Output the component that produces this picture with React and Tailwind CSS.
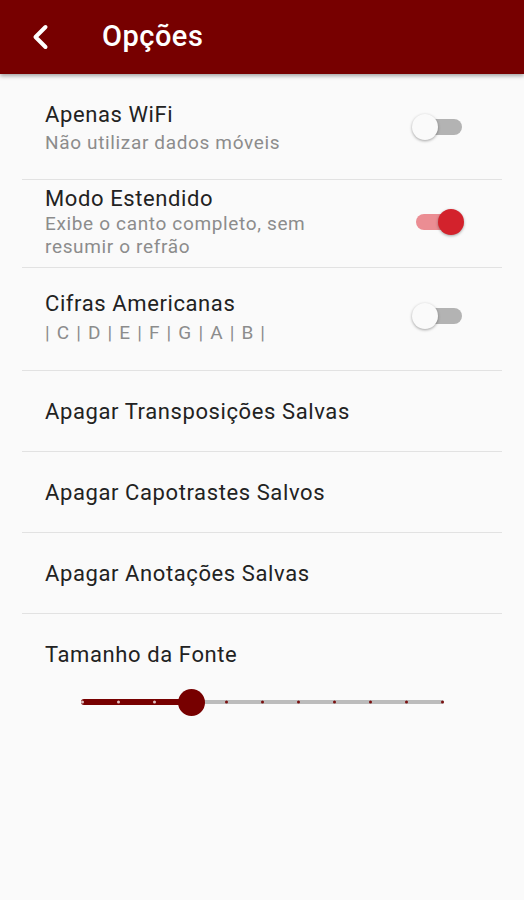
import { useState } from "react";

const Toggle = ({ on, onChange }) => (
  <button
    type="button"
    onClick={onChange}
    aria-pressed={on}
    className={`flex h-[30px] w-[52px] shrink-0 items-center rounded-full ${
      on ? "flex-row-reverse" : ""
    }`}
  >
    <span
      className={`z-10 h-[26px] w-[26px] shrink-0 rounded-full shadow-[0_1px_3px_rgba(0,0,0,0.35)] ${
        on ? "bg-[#d3222c]" : "bg-[#fafafa]"
      }`}
    />
    <span
      className={`h-[16px] flex-1 ${
        on ? "-mr-[13px] ml-[4px] rounded-l-full bg-[#eb8d93]" : "-ml-[13px] mr-[2px] rounded-r-full bg-[#b3b3b3]"
      }`}
    />
  </button>
);

const Divider = () => <div className="mx-[22px] h-px bg-[#e2e2e2]" />;

const ToggleRow = ({ title, subtitle, on, onChange, className, titleClass, subClass }) => (
  <div className={`flex items-center justify-between pl-[45px] pr-[60px] ${className}`}>
    <div>
      <div className={`text-[22px] tracking-[0.6px] text-[#222] ${titleClass}`}>{title}</div>
      <div className={`text-[19px] text-[#8c8c8c] ${subClass}`}>{subtitle}</div>
    </div>
    <Toggle on={on} onChange={onChange} />
  </div>
);

const ActionRow = ({ label }) => (
  <button
    type="button"
    className="flex h-[80px] w-full items-center pl-[45px] text-left text-[22px] tracking-[0.6px] text-[#222]"
  >
    {label}
  </button>
);

export default function App() {
  const [wifi, setWifi] = useState(false);
  const [extended, setExtended] = useState(true);
  const [american, setAmerican] = useState(false);
  const [size, setSize] = useState(3);
  const steps = 10;
  const pct = (size / steps) * 100;

  return (
    <div
      className="flex min-h-[900px] w-full flex-col bg-[#fafafa]"
      style={{ fontFamily: "Roboto, 'Liberation Sans', sans-serif" }}
    >
      <header className="z-10 flex h-[74px] items-center gap-[52px] bg-[#770000] pl-[30px] shadow-[0_2px_4px_rgba(0,0,0,0.35)]">
        <button type="button" className="flex h-[30px] w-[20px] items-center justify-center">
          <svg width="20" height="28" viewBox="0 0 20 28" fill="none">
            <path d="M15.5 4L5.5 14l10 10" stroke="#fff" strokeWidth="4" strokeLinecap="round" strokeLinejoin="round" />
          </svg>
        </button>
        <h1 className="text-[29px] font-medium tracking-[0.5px] text-white">Opções</h1>
      </header>

      <ToggleRow
        className="h-[105px] pt-[1px]"
        titleClass="leading-[32px]"
        subClass="leading-[24px] tracking-[0.65px]"
        title="Apenas WiFi"
        subtitle="Não utilizar dados móveis"
        on={wifi}
        onChange={() => setWifi((v) => !v)}
      />
      <Divider />
      <ToggleRow
        className="h-[87px] pb-[3px]"
        titleClass="leading-[26px]"
        subClass="leading-[23px] tracking-[0.65px]"
        title="Modo Estendido"
        subtitle={<>Exibe o canto completo, sem<br />resumir o refrão</>}
        on={extended}
        onChange={() => setExtended((v) => !v)}
      />
      <Divider />
      <ToggleRow
        className="h-[102px] pb-[6px]"
        titleClass="leading-[34px]"
        subClass="leading-[24px] tracking-[1.2px]"
        title="Cifras Americanas"
        subtitle="| C | D | E | F | G | A | B |"
        on={american}
        onChange={() => setAmerican((v) => !v)}
      />
      <Divider />
      <ActionRow label="Apagar Transposições Salvas" />
      <Divider />
      <ActionRow label="Apagar Capotrastes Salvos" />
      <Divider />
      <ActionRow label="Apagar Anotações Salvas" />
      <Divider />

      <div className="flex flex-col pt-[26px]">
        <div className="pl-[45px] text-[22px] leading-[30px] tracking-[0.6px] text-[#222]">Tamanho da Fonte</div>
        <div className="relative ml-[81px] mr-[80px] mt-[18px] flex h-[28px] items-center">
          <div className="h-[6px] rounded-l-full bg-[#770000]" style={{ width: `${pct}%` }} />
          <button
            type="button"
            onClick={() => setSize((s) => (s + 1) % (steps + 1))}
            className="z-10 -mx-[13.5px] h-[27px] w-[27px] shrink-0 translate-x-[2px] rounded-full bg-[#770000]"
          />
          <div className="h-[4px] flex-1 rounded-r-full bg-[#bcbcbc]" />
          <div className="pointer-events-none absolute inset-x-0 top-1/2 flex -translate-y-1/2 justify-between">
            {Array.from({ length: steps + 1 }, (_, i) => (
              <span
                key={i}
                className={`h-[3px] w-[3px] rounded-full ${
                  i === size ? "opacity-0" : i < size ? "bg-[#e0c4c4]" : "bg-[#7a1010]"
                }`}
              />
            ))}
          </div>
        </div>
      </div>
    </div>
  );
}
